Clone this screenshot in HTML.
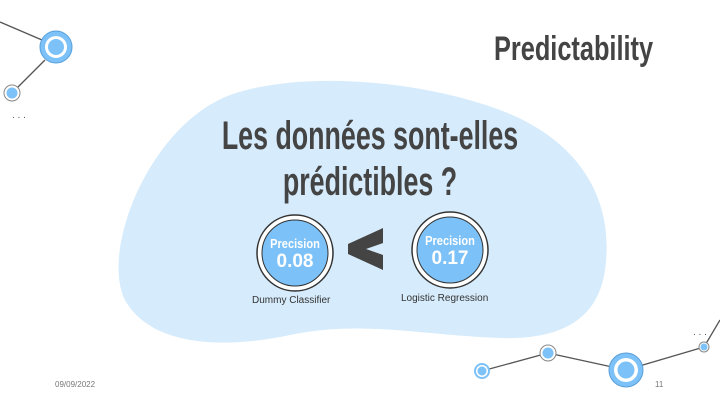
<!DOCTYPE html><html><head><style>
body{margin:0;width:720px;height:405px;overflow:hidden;background:#fff;font-family:"Liberation Sans",sans-serif;position:relative}
.t{position:absolute;font-family:"Liberation Sans Narrow","Liberation Sans",sans-serif;font-weight:bold;color:#444;white-space:nowrap}
.s{position:absolute;font-size:10px;color:#333;white-space:nowrap}
</style></head><body>
<svg width="720" height="405" style="position:absolute;left:0;top:0">
<path d="M230 95 C300 70 420 80 500 110 C580 140 615 200 605 270 C598 320 560 340 500 338 C420 335 360 320 290 335 C220 350 150 345 125 300 C100 250 150 125 230 95Z" fill="#d6ebfb"/>
<g stroke="#555" stroke-width="1.3" fill="none">
<line x1="0" y1="22" x2="42" y2="40"/><line x1="45" y1="60" x2="17" y2="88"/>
<line x1="482" y1="371" x2="548" y2="353"/><line x1="548" y1="353" x2="626" y2="370"/><line x1="626" y1="370" x2="704" y2="347"/><line x1="704" y1="347" x2="720" y2="320"/>
</g>
<circle cx="56" cy="47" r="16" fill="#7cc1f7" stroke="#5a9fd8"/><circle cx="56" cy="47" r="11" fill="#fff"/><circle cx="56" cy="47" r="8" fill="#7cc1f7"/>
<circle cx="12" cy="93" r="8" fill="#fff" stroke="#888"/><circle cx="12" cy="93" r="5.5" fill="#7cc1f7"/>
<circle cx="482" cy="371" r="8" fill="#7cc1f7"/><circle cx="482" cy="371" r="6" fill="#fff"/><circle cx="482" cy="371" r="4.5" fill="#7cc1f7"/>
<circle cx="548" cy="353" r="8" fill="#fff" stroke="#888"/><circle cx="548" cy="353" r="5.5" fill="#7cc1f7"/>
<circle cx="626" cy="370" r="17" fill="#7cc1f7" stroke="#5a9fd8"/><circle cx="626" cy="370" r="12" fill="#fff"/><circle cx="626" cy="370" r="8.5" fill="#7cc1f7"/>
<circle cx="704" cy="347" r="5" fill="#fff" stroke="#888"/><circle cx="704" cy="347" r="3.5" fill="#7cc1f7"/>
<circle cx="295" cy="253" r="38" fill="#fff" stroke="#333" stroke-width="1.5"/><circle cx="295" cy="253" r="33" fill="#7cc1f7" stroke="#333" stroke-width="1"/>
<circle cx="450" cy="250" r="38" fill="#fff" stroke="#333" stroke-width="1.5"/><circle cx="450" cy="250" r="33" fill="#7cc1f7" stroke="#333" stroke-width="1"/>
<polygon points="383,228 383,243 366,249 383,255 383,270 348,254 348,244" fill="#444"/>
<text x="12" y="118" font-size="10" fill="#555">. . .</text>
<text x="693" y="335" font-size="10" fill="#555">. . .</text>
</svg>
<div class="t" style="left:494px;top:30px;font-size:34px;transform:scaleX(.745);transform-origin:left top">Predictability</div>
<div class="t" style="left:0;width:740px;text-align:center;top:113px;font-size:40px;line-height:46px;transform:scaleX(.67);transform-origin:370px 0">Les données sont-elles<br>prédictibles ?</div>
<div class="t" style="left:255px;width:80px;text-align:center;top:236px;color:#fff;font-size:13px;transform:scaleX(.85)">Precision</div>
<div class="t" style="left:255px;width:80px;text-align:center;top:251px;color:#fff;font-size:19px">0.08</div>
<div class="t" style="left:410px;width:80px;text-align:center;top:233px;color:#fff;font-size:13px;transform:scaleX(.85)">Precision</div>
<div class="t" style="left:410px;width:80px;text-align:center;top:248px;color:#fff;font-size:19px">0.17</div>
<div class="s" style="left:252px;top:295px">Dummy Classifier</div>
<div class="s" style="left:401px;top:293px">Logistic Regression</div>
<div class="s" style="left:55px;top:380px;font-size:8px;color:#777">09/09/2022</div>
<div class="s" style="left:655px;top:380px;font-size:8px;color:#777">11</div>
</body></html>
